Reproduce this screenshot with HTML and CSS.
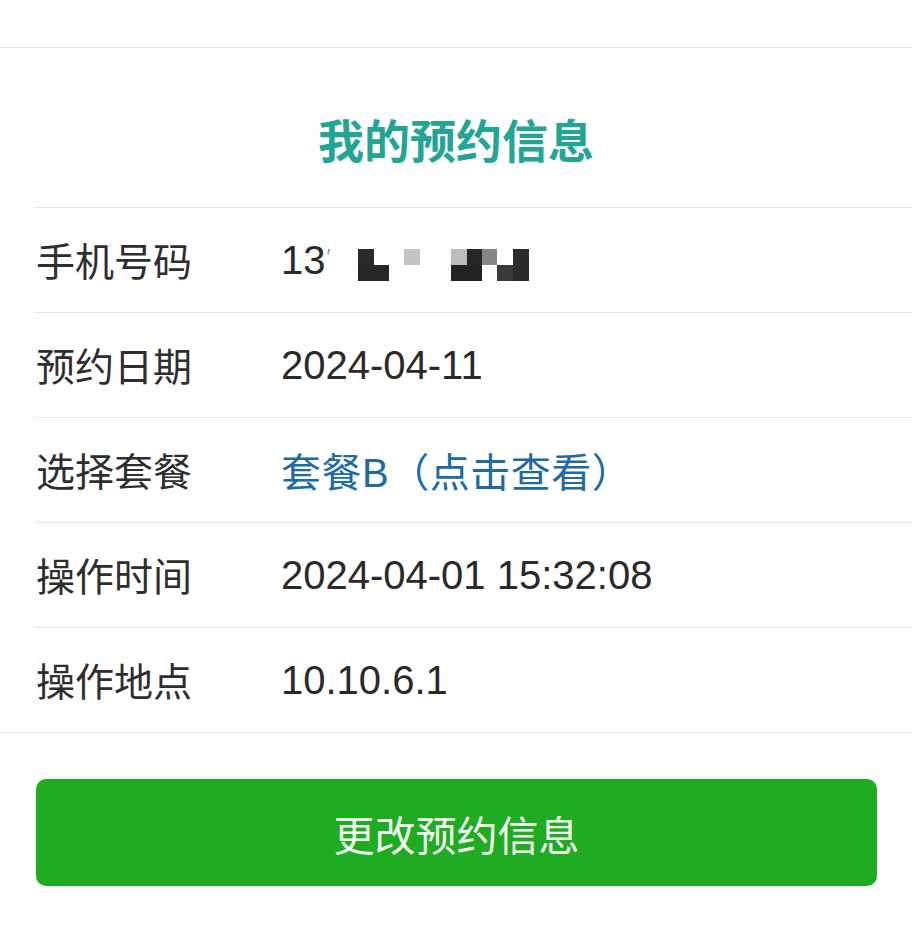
FILE: index.html
```html
<!DOCTYPE html>
<html lang="zh-CN">
<head>
<meta charset="utf-8">
<title>我的预约信息</title>
<link rel="stylesheet" href="styles.css">
</head>
<body>
<div class="topbar"></div>
<h1 class="title">我的预约信息</h1>
<div class="list">
  <div class="row">
    <div class="label">手机号码</div>
    <div class="value phone">13<span class="cut">′</span><svg class="mosaic" width="172" height="32" viewBox="0 0 172 32"><rect x="0" y="0" width="16" height="16" fill="#2a2a2a"/><rect x="0" y="16" width="31" height="16" fill="#262626"/><rect x="46" y="0" width="16" height="16" fill="#c4c4c4"/><rect x="93" y="0" width="16" height="16" fill="#bdbdbd"/><rect x="109" y="0" width="15" height="16" fill="#262626"/><rect x="124" y="0" width="15" height="16" fill="#858585"/><rect x="155" y="0" width="16" height="16" fill="#2b2b2b"/><rect x="93" y="16" width="31" height="16" fill="#232323"/><rect x="139" y="16" width="16" height="16" fill="#3a3a3a"/><rect x="155" y="16" width="16" height="16" fill="#2a2a2a"/></svg></div>
  </div>
  <div class="row">
    <div class="label">预约日期</div>
    <div class="value">2024-04-11</div>
  </div>
  <div class="row">
    <div class="label">选择套餐</div>
    <div class="value"><a class="link" href="#">套餐B（点击查看）</a></div>
  </div>
  <div class="row">
    <div class="label">操作时间</div>
    <div class="value">2024-04-01 15:32:08</div>
  </div>
  <div class="row">
    <div class="label">操作地点</div>
    <div class="value">10.10.6.1</div>
  </div>
</div>
<div class="actions">
  <button class="btn" type="button">更改预约信息</button>
</div>
</body>
</html>
```
FILE: styles.css
```css
html, body {
  margin: 0;
  padding: 0;
  background: #ffffff;
}
body {
  font-family: "Liberation Sans", "Noto Sans CJK SC", sans-serif;
  color: #2b2b2b;
}
.topbar {
  height: 47px;
  border-bottom: 1px solid #e6e6e6;
}
.title {
  margin: 0;
  height: 159px;
  box-sizing: border-box;
  padding-top: 62px;
  text-align: center;
  font-family: "Noto Sans CJK SC", sans-serif;
  font-size: 46px;
  line-height: 56px;
  font-weight: 700;
  color: #22a595;
}
.list {
  padding-left: 34px;
  border-bottom: 1px solid #e6e6e6;
}
.row {
  display: flex;
  align-items: center;
  height: 104px;
  border-top: 1px solid #e6e6e6;
}
.label {
  width: 245px;
  padding-left: 2px;
  font-family: "Noto Sans CJK SC", sans-serif;
  font-size: 39px;
  color: #2e2e2e;
  padding-bottom: 2px;
}
.value {
  font-size: 40px;
  color: #2a2a2a;
  display: flex;
  align-items: center;
}
.phone .cut {
  display: inline-block;
  font-size: 22px;
  color: #9a9a9a;
  align-self: flex-start;
  margin-top: 6px;
  margin-left: 1px;
}
.mosaic {
  display: block;
  margin-left: 27px;
  margin-top: 10px;
}
.link {
  color: #1c6aa6;
  text-decoration: none;
  font-family: "Liberation Sans", "Noto Sans CJK SC", sans-serif;
  letter-spacing: 0.5px;
}
.actions {
  padding: 46px 35px 0 36px;
}
.btn {
  display: block;
  width: 100%;
  height: 107px;
  border: none;
  border-radius: 10px;
  background: #1fab22;
  color: #f2fff0;
  font-family: "Noto Sans CJK SC", sans-serif;
  font-size: 41px;
  cursor: pointer;
}
```
